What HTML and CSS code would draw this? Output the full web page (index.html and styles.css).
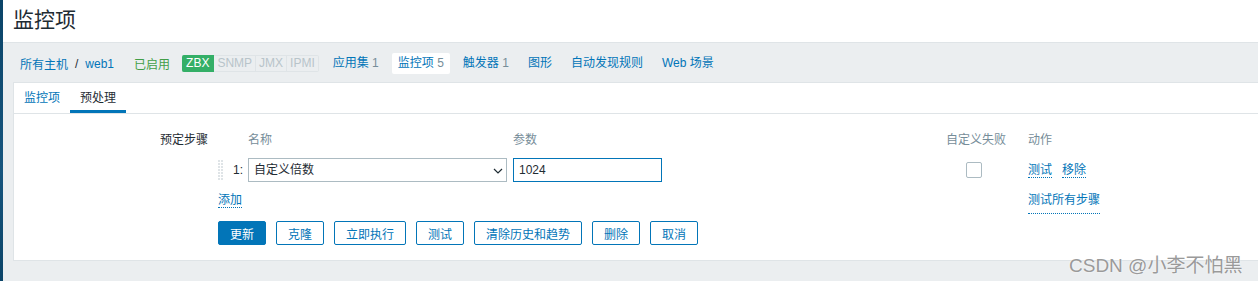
FILE: index.html
```html
<!DOCTYPE html>
<html lang="zh-CN">
<head>
    <meta charset="UTF-8">
    <title>监控项</title>
    <link rel="stylesheet" href="styles.css">
</head>
<body>
    <div class="layout">
        <div class="sidebar-edge"></div>
        <div class="main">
            <header class="header">
                <h1>监控项</h1>
            </header>

            <nav class="host-nav">
                <a class="crumb" href="#">所有主机</a>
                <span class="crumb-sep">/</span>
                <a class="crumb" href="#">web1</a>
                <span class="status-on">已启用</span>
                <div class="tags">
                    <span class="tag tag-green">ZBX</span>
                    <span class="tag">SNMP</span>
                    <span class="tag">JMX</span>
                    <span class="tag">IPMI</span>
                </div>
                <ul class="nav-items">
                    <li><a href="#">应用集</a> <span class="count">1</span></li>
                    <li class="selected"><a href="#">监控项</a> <span class="count">5</span></li>
                    <li><a href="#">触发器</a> <span class="count">1</span></li>
                    <li><a href="#">图形</a></li>
                    <li><a href="#">自动发现规则</a></li>
                    <li><a href="#">Web 场景</a></li>
                </ul>
            </nav>

            <div class="content">
                <ul class="tabs">
                    <li><a href="#">监控项</a></li>
                    <li class="active"><a href="#">预处理</a></li>
                </ul>

                <form class="form">
                    <div class="form-row">
                        <label class="form-label">预定步骤</label>
                        <div class="steps">
                            <div class="th"></div>
                            <div class="th"></div>
                            <div class="th">名称</div>
                            <div class="th">参数</div>
                            <div class="th">自定义失败</div>
                            <div class="th">动作</div>

                            <div class="drag">
                                <svg width="5" height="20" viewBox="0 0 5 20">
                                    <g fill="#dfe4e7">
                                        <rect x="0" y="0" width="2" height="2"/><rect x="3" y="0" width="2" height="2"/>
                                        <rect x="0" y="3" width="2" height="2"/><rect x="3" y="3" width="2" height="2"/>
                                        <rect x="0" y="6" width="2" height="2"/><rect x="3" y="6" width="2" height="2"/>
                                        <rect x="0" y="9" width="2" height="2"/><rect x="3" y="9" width="2" height="2"/>
                                        <rect x="0" y="12" width="2" height="2"/><rect x="3" y="12" width="2" height="2"/>
                                        <rect x="0" y="15" width="2" height="2"/><rect x="3" y="15" width="2" height="2"/>
                                        <rect x="0" y="18" width="2" height="2"/><rect x="3" y="18" width="2" height="2"/>
                                    </g>
                                </svg>
                            </div>
                            <div class="num">1:</div>
                            <div class="select-wrap">
                                <select class="select">
                                    <option>自定义倍数</option>
                                </select>
                                <svg class="chevron" width="10" height="6" viewBox="0 0 10 6">
                                    <path d="M1 1 L5 5 L9 1" fill="none" stroke="#1f2c33" stroke-width="1.2"/>
                                </svg>
                            </div>
                            <div><input class="text-input" type="text" value="1024"></div>
                            <div><span class="checkbox"></span></div>
                            <div class="actions">
                                <a class="link" href="#">测试</a>
                                <a class="link" href="#">移除</a>
                            </div>

                            <div class="add-cell"><a class="link" href="#">添加</a></div>
                            <div class="actions"><a class="link" href="#">测试所有步骤</a></div>
                        </div>
                    </div>

                    <div class="buttons">
                        <button type="button" class="btn btn-main">更新</button>
                        <button type="button" class="btn">克隆</button>
                        <button type="button" class="btn">立即执行</button>
                        <button type="button" class="btn">测试</button>
                        <button type="button" class="btn">清除历史和趋势</button>
                        <button type="button" class="btn">删除</button>
                        <button type="button" class="btn">取消</button>
                    </div>
                </form>
            </div>
        </div>
    </div>

    <div class="watermark">CSDN @小李不怕黑</div>
</body>
</html>
```

FILE: styles.css
```css
body {
    margin: 0;
    font-family: "Liberation Sans", Arial, "Noto Sans CJK SC", sans-serif;
    font-size: 12px;
    color: #1f2c33;
    background-color: #ebeef0;
    height: 281px;
    overflow: hidden;
}

a {
    color: #0275b8;
    text-decoration: none;
}

.layout {
    display: flex;
    height: 281px;
}

.sidebar-edge {
    width: 3px;
    flex-shrink: 0;
    background: linear-gradient(#0b4468, #16557e 60%, #0b4468);
}

.main {
    flex: 1;
}

.header {
    height: 42px;
    background-color: white;
    border-bottom: 1px solid #dfe4e7;
    padding-left: 10px;
}

.header h1 {
    margin: 0;
    font-size: 21px;
    font-weight: normal;
    line-height: 39px;
}

.host-nav {
    height: 37px;
    padding-top: 2px;
    display: flex;
    align-items: center;
    padding-left: 17px;
}

.crumb-sep {
    margin: 0 7px;
    color: #1f2c33;
}

.status-on {
    color: #429e47;
    margin-left: 20px;
}

.tags {
    display: flex;
    margin-left: 12px;
}

.tag {
    height: 15px;
    line-height: 15px;
    padding: 0 3px;
    border: 1px solid #dfe4e7;
    border-left: none;
    color: #b8c4ca;
    background-color: #ebeef0;
}

.tag-green {
    background-color: #34af67;
    border-color: #34af67;
    color: white;
    padding: 0 4px;
    border-radius: 2px 0 0 2px;
}

.tag:last-child {
    border-radius: 0 2px 2px 0;
}

.nav-items {
    list-style: none;
    margin: 0 0 0 8px;
    padding: 0;
    display: flex;
    gap: 7px;
}

.nav-items li {
    padding: 0 6px;
    height: 21px;
    line-height: 21px;
    border-radius: 2px;
}

.nav-items li.selected {
    background-color: white;
}

.count {
    color: #768d99;
}

.content {
    margin-left: 10px;
    height: 177px;
    background-color: white;
    border: 1px solid #dfe4e7;
    border-right: none;
}

.tabs {
    list-style: none;
    margin: 0;
    padding: 0;
    display: flex;
    height: 30px;
    border-bottom: 1px solid #dfe4e7;
}

.tabs li {
    padding: 0 10px;
    line-height: 31px;
    height: 27px;
}

.tabs li.active {
    border-bottom: 3px solid #0275b8;
}

.tabs li.active a {
    color: #1f2c33;
}

.form {
    padding-top: 19px;
}

.form-row {
    display: flex;
}

.form-label {
    width: 194px;
    padding-right: 10px;
    text-align: right;
    line-height: 14px;
}

.steps {
    display: grid;
    grid-template-columns: 15px 15px 265px 433px 82px auto;
    align-items: center;
}

.th {
    color: #768d99;
    line-height: 14px;
    height: 14px;
    margin-bottom: 11px;
}

.drag {
    height: 24px;
    display: flex;
    align-items: center;
}

.num {
    line-height: 24px;
}

.select-wrap {
    position: relative;
    width: 259px;
}

.select {
    appearance: none;
    width: 259px;
    height: 24px;
    border: 1px solid #acbbc2;
    border-radius: 0;
    background-color: white;
    padding: 0 5px;
    font-family: inherit;
    font-size: 12px;
    color: #1f2c33;
    display: block;
}

.chevron {
    position: absolute;
    right: 4px;
    top: 10px;
}

.text-input {
    width: 149px;
    height: 24px;
    box-sizing: border-box;
    border: 1px solid #0275b8;
    padding: 0 5px;
    font-family: inherit;
    font-size: 12px;
    color: #1f2c33;
    display: block;
}

.checkbox {
    display: block;
    width: 14px;
    height: 14px;
    margin-left: 20px;
    border: 1px solid #acbbc2;
    border-radius: 2px;
}

.actions {
    display: flex;
    gap: 10px;
}

.link {
    border-bottom: 1px dotted #0275b8;
    line-height: 14px;
}

.add-cell {
    grid-column: 1 / 6;
    padding-top: 11px;
    height: 21px;
}

.steps .actions:last-child {
    padding-top: 11px;
    height: 21px;
}

.buttons {
    display: flex;
    gap: 10px;
    margin-left: 204px;
    margin-top: 7px;
}

.btn {
    height: 24px;
    padding: 0 11px;
    border: 1px solid #0275b8;
    border-radius: 2px;
    background-color: white;
    color: #0275b8;
    font-family: inherit;
    font-size: 12px;
    cursor: pointer;
}

.btn-main {
    background-color: #0275b8;
    color: white;
}

.watermark {
    position: absolute;
    left: 1069px;
    top: 250px;
    font-size: 19px;
    color: #9a9a9a;
    text-shadow: 0 0 2px white;
    white-space: nowrap;
}
```
